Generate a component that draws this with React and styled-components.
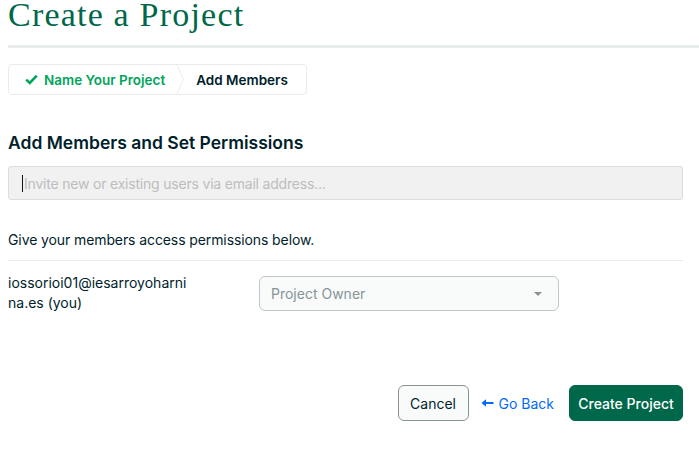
import styled, { createGlobalStyle } from 'styled-components';

const GlobalStyle = createGlobalStyle`
  html, body {
    margin: 0;
    padding: 0;
    background: #ffffff;
  }
  body {
    font-family: 'Inter', 'Liberation Sans', sans-serif;
    color: #001e2b;
    -webkit-font-smoothing: antialiased;
  }
`;

const Page = styled.div`
  padding: 0 0 0 8px;
  width: 691px;
  overflow: hidden;
`;

const Title = styled.h1`
  margin: 0;
  padding-top: 1px;
  font-family: 'Liberation Serif', 'DejaVu Serif', serif;
  font-weight: 400;
  font-size: 34px;
  line-height: 27px;
  color: #00684a;
  letter-spacing: 1.2px;
`;

const Divider = styled.hr`
  margin: 17px 0 0;
  border: 0;
  height: 3px;
  background: #e8edeb;
`;

const Form = styled.div`
  width: 675px;
`;

const Steps = styled.nav`
  display: inline-flex;
  align-items: stretch;
  margin-top: 16px;
  height: 29px;
  border: 1px solid #e8edeb;
  border-radius: 4px;
`;

const Step = styled.div`
  display: flex;
  align-items: center;
  gap: 6px;
  padding: ${({ $first }) => ($first ? '0 11px 0 16px' : '0 18px 0 12px')};
  font-size: 13.5px;
  font-weight: 600;
  color: ${({ $done }) => ($done ? '#00a35c' : '#001e2b')};
`;

const Chevron = () => (
  <svg width="8" height="31" viewBox="0 0 8 31" style={{ margin: '-1px 0' }}>
    <path d="M0.5 0 L7.5 15.5 L0.5 31" fill="none" stroke="#e8edeb" strokeWidth="1" />
  </svg>
);

const Check = () => (
  <svg width="13" height="11" viewBox="0 0 13 11">
    <path d="M1.2 5.6 L4.8 9 L11.8 1.6" fill="none" stroke="#00a35c" strokeWidth="2.6" />
  </svg>
);

const BackArrow = () => (
  <svg width="13" height="10" viewBox="0 0 13 10">
    <path d="M12.5 5 H2" fill="none" stroke="#016bf8" strokeWidth="2" />
    <path d="M0.5 5 L5 1.2 V8.8 Z" fill="#016bf8" />
  </svg>
);

const Heading = styled.h2`
  margin: 36px 0 0;
  font-size: 17.5px;
  line-height: 24px;
  font-weight: 600;
  color: #001e2b;
`;

const InviteInput = styled.div`
  box-sizing: border-box;
  margin-top: 11px;
  height: 34px;
  display: flex;
  align-items: center;
  padding-left: 13px;
  background: #f1f1f1;
  border: 1px solid #dddddd;
  border-radius: 3px;
  font-size: 14px;
  letter-spacing: -0.2px;
  color: #bdbdbd;
`;

const Caret = styled.span`
  display: inline-block;
  width: 1px;
  height: 17px;
  background: #111;
  margin-right: 1px;
`;

const Hint = styled.p`
  margin: 30px 0 0;
  padding-bottom: 10px;
  border-bottom: 1px solid #e8edeb;
  font-size: 14px;
  line-height: 20px;
  letter-spacing: -0.1px;
`;

const MemberRow = styled.div`
  display: grid;
  grid-template-columns: 181px 300px;
  column-gap: 70px;
  align-items: start;
  padding-top: 12px;
`;

const Email = styled.div`
  font-size: 14px;
  line-height: 20px;
  word-break: break-all;
`;

const Select = styled.div`
  box-sizing: border-box;
  margin-top: 3px;
  height: 35px;
  display: flex;
  align-items: center;
  justify-content: space-between;
  padding: 0 16px 0 11px;
  background: #f9fbfa;
  border: 1px solid #c1c7c6;
  border-radius: 6px;
  font-size: 14px;
  color: #889397;
`;

const Arrow = styled.span`
  width: 0;
  height: 0;
  border-left: 4px solid transparent;
  border-right: 4px solid transparent;
  border-top: 4px solid #889397;
`;

const Actions = styled.div`
  display: flex;
  justify-content: flex-end;
  align-items: center;
  margin-top: 72px;
`;

const Button = styled.button`
  box-sizing: border-box;
  height: 36px;
  width: ${({ $primary }) => ($primary ? '114px' : '71px')};
  padding: 0;
  border-radius: 6px;
  font-family: inherit;
  font-size: 14px;
  font-weight: ${({ $primary }) => ($primary ? 500 : 400)};
  color: ${({ $primary }) => ($primary ? '#ffffff' : '#001e2b')};
  background: ${({ $primary }) => ($primary ? '#00684a' : '#f9fbfa')};
  border: 1px solid ${({ $primary }) => ($primary ? '#00684a' : '#889397')};
`;

const BackLink = styled.a`
  display: flex;
  align-items: center;
  gap: 5px;
  margin: 0 15px 0 12px;
  font-size: 14px;
  color: #016bf8;
  text-decoration: none;
`;

export default function App() {
  return (
    <>
      <GlobalStyle />
      <Page>
        <Title>Create a Project</Title>
        <Divider />
        <Form>
          <Steps>
            <Step $first $done>
              <Check />
              Name Your Project
            </Step>
            <Chevron />
            <Step>Add Members</Step>
          </Steps>
          <Heading>Add Members and Set Permissions</Heading>
          <InviteInput>
            <Caret />
            Invite new or existing users via email address...
          </InviteInput>
          <Hint>Give your members access permissions below.</Hint>
          <MemberRow>
            <Email>iossorioi01@iesarroyoharnina.es (you)</Email>
            <Select>
              Project Owner
              <Arrow />
            </Select>
          </MemberRow>
          <Actions>
            <Button>Cancel</Button>
            <BackLink href="#">
              <BackArrow />
              Go Back
            </BackLink>
            <Button $primary>Create Project</Button>
          </Actions>
        </Form>
      </Page>
    </>
  );
}
